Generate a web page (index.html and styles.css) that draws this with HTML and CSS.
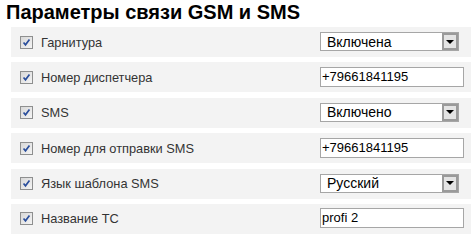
FILE: index.html
```html
<!DOCTYPE html>
<html lang="ru">
<head>
<meta charset="utf-8">
<title>Параметры связи GSM и SMS</title>
<link rel="stylesheet" href="styles.css">
</head>
<body>
<h1 class="title">Параметры связи GSM и SMS</h1>
<div class="rows">
  <div class="row">
    <label class="label"><span class="check"><svg viewBox="0 0 13 13" width="13" height="13"><path d="M3 6.5 L5.3 9.2 L10 3" fill="none" stroke="#2a4e9c" stroke-width="2"/></svg></span>Гарнитура</label>
    <div class="select"><span class="select-text">Включена</span><span class="arrow"><span class="tri"></span></span></div>
  </div>
  <div class="row">
    <label class="label"><span class="check"><svg viewBox="0 0 13 13" width="13" height="13"><path d="M3 6.5 L5.3 9.2 L10 3" fill="none" stroke="#2a4e9c" stroke-width="2"/></svg></span>Номер диспетчера</label>
    <div class="input">+79661841195</div>
  </div>
  <div class="row">
    <label class="label"><span class="check"><svg viewBox="0 0 13 13" width="13" height="13"><path d="M3 6.5 L5.3 9.2 L10 3" fill="none" stroke="#2a4e9c" stroke-width="2"/></svg></span>SMS</label>
    <div class="select"><span class="select-text">Включено</span><span class="arrow"><span class="tri"></span></span></div>
  </div>
  <div class="row">
    <label class="label"><span class="check"><svg viewBox="0 0 13 13" width="13" height="13"><path d="M3 6.5 L5.3 9.2 L10 3" fill="none" stroke="#2a4e9c" stroke-width="2"/></svg></span>Номер для отправки SMS</label>
    <div class="input">+79661841195</div>
  </div>
  <div class="row">
    <label class="label"><span class="check"><svg viewBox="0 0 13 13" width="13" height="13"><path d="M3 6.5 L5.3 9.2 L10 3" fill="none" stroke="#2a4e9c" stroke-width="2"/></svg></span>Язык шаблона SMS</label>
    <div class="select"><span class="select-text">Русский</span><span class="arrow"><span class="tri"></span></span></div>
  </div>
  <div class="row">
    <label class="label"><span class="check"><svg viewBox="0 0 13 13" width="13" height="13"><path d="M3 6.5 L5.3 9.2 L10 3" fill="none" stroke="#2a4e9c" stroke-width="2"/></svg></span>Название ТС</label>
    <div class="input">profi 2</div>
  </div>
</div>
</body>
</html>
```
FILE: styles.css
```css
html, body {
  margin: 0;
  padding: 0;
  background: #ffffff;
  font-family: "Liberation Sans", Arial, sans-serif;
}
body {
  overflow: hidden;
}
.title {
  margin: 1px 0 4px 6px;
  font-size: 20px;
  line-height: 22px;
  font-weight: bold;
  color: #000;
}
.rows {
  margin-left: 11px;
  display: flex;
  flex-direction: column;
  gap: 5.4px;
}
.row {
  height: 30px;
  background: #f3f3f3;
  display: flex;
  align-items: center;
}
.label {
  width: 300px;
  padding-left: 9px;
  display: flex;
  align-items: center;
  font-size: 12.8px;
  color: #333;
}
.check {
  width: 13px;
  height: 13px;
  box-sizing: border-box;
  margin-right: 8px;
  border: 1px solid #8e8f8f;
  background: linear-gradient(135deg, #d8d8d8, #f4f4f4);
  display: flex;
  align-items: center;
  justify-content: center;
}
.check svg {
  display: block;
  width: 11px;
  height: 11px;
}
.select {
  width: 139px;
  height: 19px;
  box-sizing: border-box;
  border: 1px solid #a6a6a6;
  background: #fff;
  display: flex;
  align-items: center;
  justify-content: space-between;
  font-size: 14px;
  color: #000;
  margin-top: -1px;
}
.select-text {
  padding-left: 6px;
}
.arrow {
  width: 16px;
  height: 17px;
  box-sizing: border-box;
  border: 2px solid #9a9a9a;
  background: #e4e4e4;
  display: flex;
  align-items: center;
  justify-content: center;
}
.tri {
  width: 0;
  height: 0;
  border-left: 4px solid transparent;
  border-right: 4px solid transparent;
  border-top: 4px solid #000;
}
.input {
  width: 144px;
  height: 20px;
  box-sizing: border-box;
  border: 1px solid #a6a6a6;
  background: #fff;
  font-size: 13px;
  line-height: 18px;
  padding-left: 1px;
  color: #000;
  margin-top: -1px;
}
```
